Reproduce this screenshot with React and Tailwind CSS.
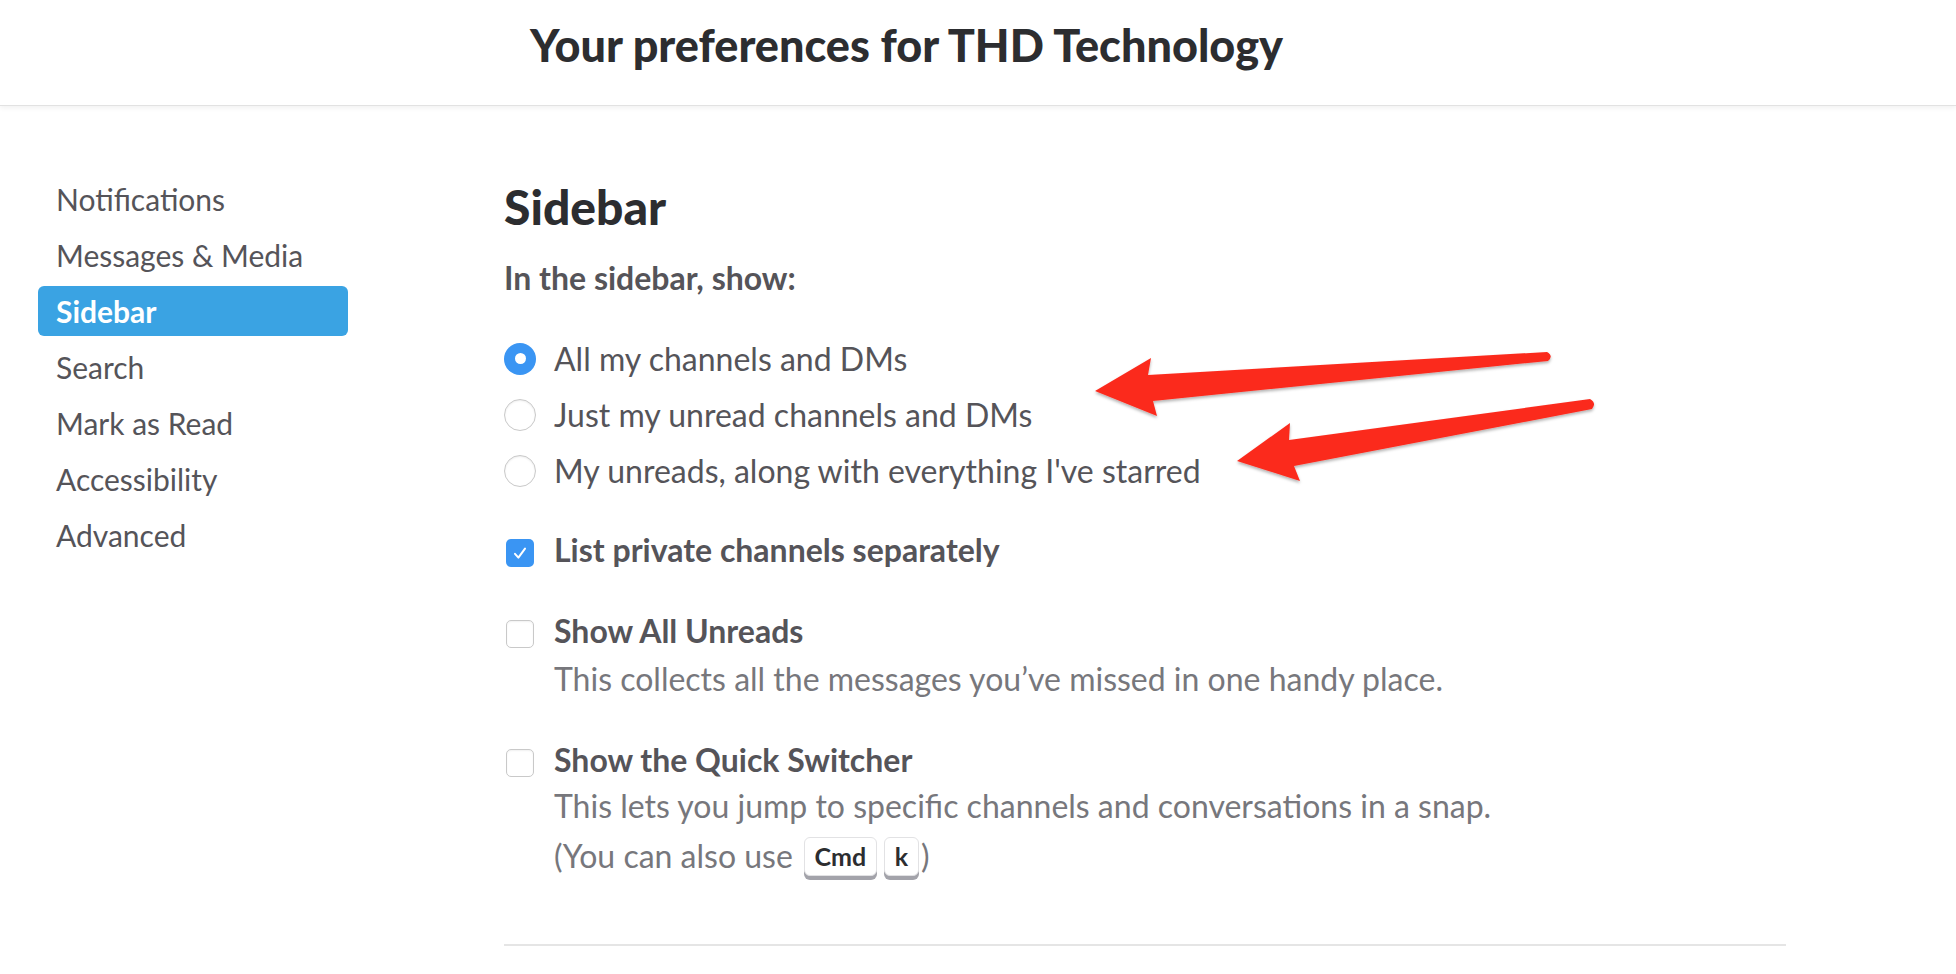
import React from "react";

const navItems = [
  "Notifications",
  "Messages & Media",
  "Sidebar",
  "Search",
  "Mark as Read",
  "Accessibility",
  "Advanced",
];

const radioOptions = [
  { label: "All my channels and DMs", checked: true },
  { label: "Just my unread channels and DMs", checked: false },
  { label: "My unreads, along with everything I've starred", checked: false },
];

function Radio({ checked }) {
  if (checked) {
    return (
      <span className="mt-[12px] w-[32px] h-[32px] shrink-0 rounded-full bg-[#3a95f3] flex items-center justify-center">
        <span className="w-[11px] h-[11px] rounded-full bg-white" />
      </span>
    );
  }
  return (
    <span className="mt-[12px] w-[32px] h-[32px] shrink-0 rounded-full bg-white border border-[#c9c9c9] shadow-[inset_0_1px_2px_rgba(0,0,0,0.08)]" />
  );
}

function Checkbox({ checked }) {
  return (
    <span className="w-[32px] flex justify-center shrink-0 mt-[8px]">
      {checked ? (
        <span className="w-[28px] h-[28px] rounded-[5px] bg-[#3a95f3] flex items-center justify-center">
          <svg width="16" height="14" viewBox="0 0 16 14" fill="none">
            <path d="M3 7.8 L6.4 11.6 L13 2.6" stroke="white" strokeWidth="2" strokeLinecap="round" strokeLinejoin="round" />
          </svg>
        </span>
      ) : (
        <span className="w-[28px] h-[28px] rounded-[5px] bg-white border border-[#c9c9c9] shadow-[inset_0_1px_2px_rgba(0,0,0,0.06)]" />
      )}
    </span>
  );
}

function Key({ children, className }) {
  return (
    <span
      className={
        "inline-flex items-center justify-center h-[39px] rounded-[6px] bg-white border border-[#e2e2e4] shadow-[0_4px_0_#a3a3aa] text-[25px] leading-none font-bold text-[#2c2d30] " +
        className
      }
    >
      {children}
    </span>
  );
}

function Arrows() {
  return (
    <svg
      className="absolute inset-0 pointer-events-none"
      width="1956"
      height="974"
      viewBox="0 0 1956 974"
    >
      <defs>
        <filter id="arrowShadow" x="-10%" y="-50%" width="120%" height="200%">
          <feDropShadow dx="0" dy="2" stdDeviation="1.6" floodColor="#000" floodOpacity="0.3" />
        </filter>
      </defs>
      <g fill="#fb2b1f" filter="url(#arrowShadow)">
        <path d="M1095 391 L1151 358 L1148 375 L1547 352 Q1554 356 1548 361 L1153 401 L1157 416 Z" />
        <path d="M1237 461 L1290 423 L1289 440 L1590 399 Q1597 403 1592 409 L1294 466 L1300 481 Z" />
      </g>
    </svg>
  );
}

export default function App() {
  return (
    <div className="relative w-[1956px] h-[974px] overflow-hidden bg-white font-['Lato','Liberation_Sans',sans-serif] text-[#555459]">
      <header className="h-[106px] border-b border-[#e2e2e2] shadow-[0_2px_5px_rgba(0,0,0,0.06)] pl-[530px] pt-[18px]">
        <h1 className="text-[45px] leading-[1.2] font-black text-[#2c2d30]">
          Your preferences for THD Technology
        </h1>
      </header>

      <div className="flex items-start pt-[68px]">
        {/* Left nav */}
        <nav className="w-[504px] shrink-0 pl-[38px] flex flex-col gap-[6px]">
          {navItems.map((item) => (
            <div
              key={item}
              className={
                item === "Sidebar"
                  ? "w-[310px] h-[50px] rounded-[6px] pl-[18px] flex items-center text-[30px] leading-[1.2] font-bold text-white bg-[#3aa3e3]"
                  : "w-[310px] h-[50px] rounded-[6px] pl-[18px] flex items-center text-[30px] leading-[1.2]"
              }
            >
              {item}
            </div>
          ))}
        </nav>

        {/* Main panel */}
        <main className="w-[1282px] mt-[4px]">
          <h2 className="text-[48px] leading-[1.2] font-black text-[#2c2d30]">Sidebar</h2>
          <p className="mt-[23px] text-[32px] leading-[1.2] font-bold">In the sidebar, show:</p>

          <div className="mt-[34px]">
            {radioOptions.map((opt) => (
              <div key={opt.label} className="h-[56px] flex items-start gap-[18px]">
                <Radio checked={opt.checked} />
                <span className="mt-[9px] text-[32px] leading-[1.2]">{opt.label}</span>
              </div>
            ))}
          </div>

          <div className="mt-[32px] flex items-start gap-[18px]">
            <Checkbox checked />
            <span className="text-[32px] leading-[1.2] font-bold">List private channels separately</span>
          </div>

          <div className="mt-[43px] flex items-start gap-[18px]">
            <Checkbox />
            <div>
              <div className="text-[32px] leading-[1.2] font-bold">Show All Unreads</div>
              <div className="mt-[3px] text-[32px] leading-[50px] text-[#77777c]">
                This collects all the messages you’ve missed in one handy place.
              </div>
            </div>
          </div>

          <div className="mt-[37px] flex items-start gap-[18px]">
            <Checkbox />
            <div>
              <div className="text-[32px] leading-[1.2] font-bold">Show the Quick Switcher</div>
              <div className="mt-[2px] text-[32px] leading-[50px] text-[#77777c]">
                <div>This lets you jump to specific channels and conversations in a snap.</div>
                <div className="flex items-center">
                  <span>(You can also use</span>
                  <Key className="ml-[11px] w-[73px]">Cmd</Key>
                  <Key className="ml-[7px] w-[35px]">k</Key>
                  <span className="ml-[2px]">)</span>
                </div>
              </div>
            </div>
          </div>

          <div className="mt-[63px] h-[2px] bg-[#e5e5e5]" />
        </main>
      </div>

      <Arrows />
    </div>
  );
}
